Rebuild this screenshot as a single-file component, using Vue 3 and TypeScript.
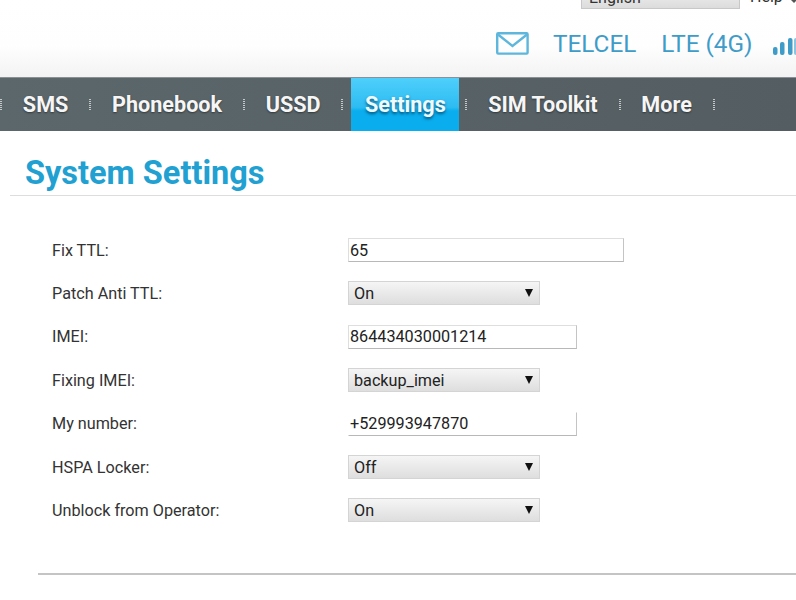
<template>
  <div class="page">
    <header class="top">
      <div class="lang-row">
        <div class="lang-box">
          <span class="lang-text">English</span>
          <span class="lang-arrow"></span>
        </div>
        <span class="help">Help</span>
        <span class="help-arrow"></span>
      </div>
      <div class="status">
        <svg class="mail" width="33" height="23" viewBox="0 0 33 23" fill="none">
          <rect x="1.2" y="1.2" width="30.4" height="20.4" rx="1" stroke="#5eb6dc" stroke-width="2.4" />
          <path d="M2 2.5 L16.5 14 L31 2.5" stroke="#5eb6dc" stroke-width="2.4" />
        </svg>
        <span class="carrier">TELCEL</span>
        <span class="network">LTE (4G)</span>
        <svg class="signal" width="23" height="17" viewBox="0 0 23 17">
          <rect x="0" y="9" width="4.5" height="8" rx="2" fill="#3f9cc8" />
          <rect x="7" y="4" width="4.5" height="13" rx="2" fill="#3f9cc8" />
          <rect x="15" y="0" width="4.5" height="17" rx="2" fill="#3f9cc8" />
          <rect x="21" y="0" width="4.5" height="17" rx="2" fill="#8cc4e0" />
        </svg>
      </div>
    </header>

    <nav class="nav">
      <span class="sep"></span>
      <template v-for="item in navItems" :key="item">
        <a class="nav-item" :class="{ active: item === 'Settings' }">{{ item }}</a>
        <span class="sep"></span>
      </template>
    </nav>

    <main class="content">
      <h1 class="title">System Settings</h1>
      <form class="form" @submit.prevent>
        <template v-for="row in rows" :key="row.label">
          <label class="label">{{ row.label }}</label>
          <div class="field">
            <input v-if="row.type === 'input'" class="text-input" :class="row.size" type="text" :value="row.value" />
            <div v-else class="select-wrap">
              <select class="select">
                <option>{{ row.value }}</option>
              </select>
            </div>
          </div>
        </template>
      </form>
      <div class="bottom-line"></div>
    </main>
  </div>
</template>

<script setup lang="ts">
interface Row {
  label: string
  type: 'input' | 'select'
  value: string
  size?: string
}

const navItems: string[] = ['SMS', 'Phonebook', 'USSD', 'Settings', 'SIM Toolkit', 'More']

const rows: Row[] = [
  { label: 'Fix TTL:', type: 'input', value: '65', size: 'wide' },
  { label: 'Patch Anti TTL:', type: 'select', value: 'On' },
  { label: 'IMEI:', type: 'input', value: '864434030001214' },
  { label: 'Fixing IMEI:', type: 'select', value: 'backup_imei' },
  { label: 'My number:', type: 'input', value: '+529993947870', size: 'open' },
  { label: 'HSPA Locker:', type: 'select', value: 'Off' },
  { label: 'Unblock from Operator:', type: 'select', value: 'On' }
]
</script>

<style>
html,
body {
  margin: 0;
  background: #ffffff;
  overflow: hidden;
}
</style>

<style scoped>
.page {
  width: 796px;
  height: 600px;
  overflow: hidden;
  font-family: Roboto, "Liberation Sans", sans-serif;
  color: #333333;
  background: #ffffff;
}

.top {
  height: 77px;
  box-sizing: border-box;
  background: linear-gradient(#ffffff 0%, #fefefe 60%, #f3f3f3 100%);
  overflow: hidden;
}

.lang-row {
  display: flex;
  height: 9px;
  padding-left: 581px;
  align-items: flex-end;
}

.lang-box {
  flex: none;
  width: 159px;
  height: 24px;
  box-sizing: border-box;
  padding-left: 7px;
  display: flex;
  align-items: center;
  justify-content: space-between;
  background: linear-gradient(#f4f4f4, #dcdcdc);
  border: 1px solid #c8c8c8;
  font-size: 16px;
}

.lang-arrow {
  width: 0;
  height: 0;
  margin-right: 9px;
  border-left: 3px solid transparent;
  border-right: 3px solid transparent;
  border-top: 4px solid #888888;
}

.help {
  flex: none;
  margin-left: 10px;
  font-size: 16px;
  line-height: 24px;
  height: 24px;
}

.help-arrow {
  flex: none;
  align-self: flex-start;
  width: 0;
  height: 0;
  margin-left: 8px;
  border-left: 3px solid transparent;
  border-right: 3px solid transparent;
  border-top: 3px solid #555555;
}

.status {
  display: flex;
  align-items: center;
  height: 50px;
  margin-top: 9px;
  padding-left: 496px;
  white-space: nowrap;
}

.mail {
  flex: none;
  margin-right: 24px;
}

.carrier,
.network {
  font-size: 24.3px;
  color: #3f9cc8;
}

.network {
  margin-left: 25px;
}

.signal {
  flex: none;
  margin-left: 21px;
  margin-top: 7px;
}

.nav {
  height: 54px;
  display: flex;
  align-items: stretch;
  background: linear-gradient(90deg, #5c676b, #545e62);
  border-top: 1px solid #8a9094;
  box-sizing: border-box;
}

.sep {
  flex: none;
  width: 2px;
  height: 12px;
  align-self: center;
  background-image: repeating-linear-gradient(#c4c8ca 0 1px, transparent 1px 2px);
}

.nav-item {
  display: flex;
  align-items: center;
  padding: 0 20.85px;
  font-size: 21.6px;
  font-weight: 700;
  color: #f6f6f6;
  text-shadow: 0 1px 2px rgba(0, 0, 0, 0.45);
  white-space: nowrap;
}

.nav-item.active {
  background: linear-gradient(#4fcffb 0%, #2dbcf2 55%, #0aaeee 62%, #0aaeee 100%);
  color: #eefaff;
  text-shadow: 0 2px 3px rgba(0, 50, 80, 0.7);
  margin: 0 6px 0 8px;
  padding: 0 13.5px;
}

.title {
  margin: 0 0 0 10px;
  height: 65px;
  box-sizing: border-box;
  padding: 22px 0 0 15px;
  font-size: 32.5px;
  line-height: 40px;
  font-weight: 700;
  color: #21a0d2;
  border-bottom: 1px solid #dddddd;
}

.form {
  display: grid;
  grid-template-columns: 296px 1fr;
  grid-auto-rows: 43.4px;
  margin: 32.4px 0 0 52px;
  align-items: center;
}

.label {
  font-size: 16.2px;
  color: #333333;
}

.field {
  display: flex;
  align-items: center;
}

.text-input {
  width: 229px;
  height: 24px;
  box-sizing: border-box;
  padding: 0 1px;
  border: 1px solid #dedede;
  border-bottom-color: #b8b8b8;
  border-right-color: #c4c4c4;
  background: #ffffff;
  font-family: Roboto, "Liberation Sans", sans-serif;
  font-size: 16.2px;
  color: #222222;
  outline: none;
}

.text-input.wide {
  width: 276px;
}

.text-input.open {
  border-top-color: transparent;
  border-left-color: transparent;
}

.select-wrap {
  position: relative;
  width: 192px;
  height: 24px;
}

.select-wrap::after {
  content: "";
  position: absolute;
  right: 7px;
  top: 8px;
  width: 0;
  height: 0;
  border-left: 4px solid transparent;
  border-right: 4px solid transparent;
  border-top: 8px solid #111111;
  pointer-events: none;
}

.select {
  appearance: none;
  width: 100%;
  height: 100%;
  box-sizing: border-box;
  padding: 0 5px;
  border: 1px solid #d4d4d4;
  border-radius: 0;
  background: linear-gradient(#f5f5f5, #dedede);
  font-family: Roboto, "Liberation Sans", sans-serif;
  font-size: 16.2px;
  color: #222222;
}

.bottom-line {
  margin: 41px 0 0 38px;
  height: 2px;
  background: #c4c4c4;
}
</style>
